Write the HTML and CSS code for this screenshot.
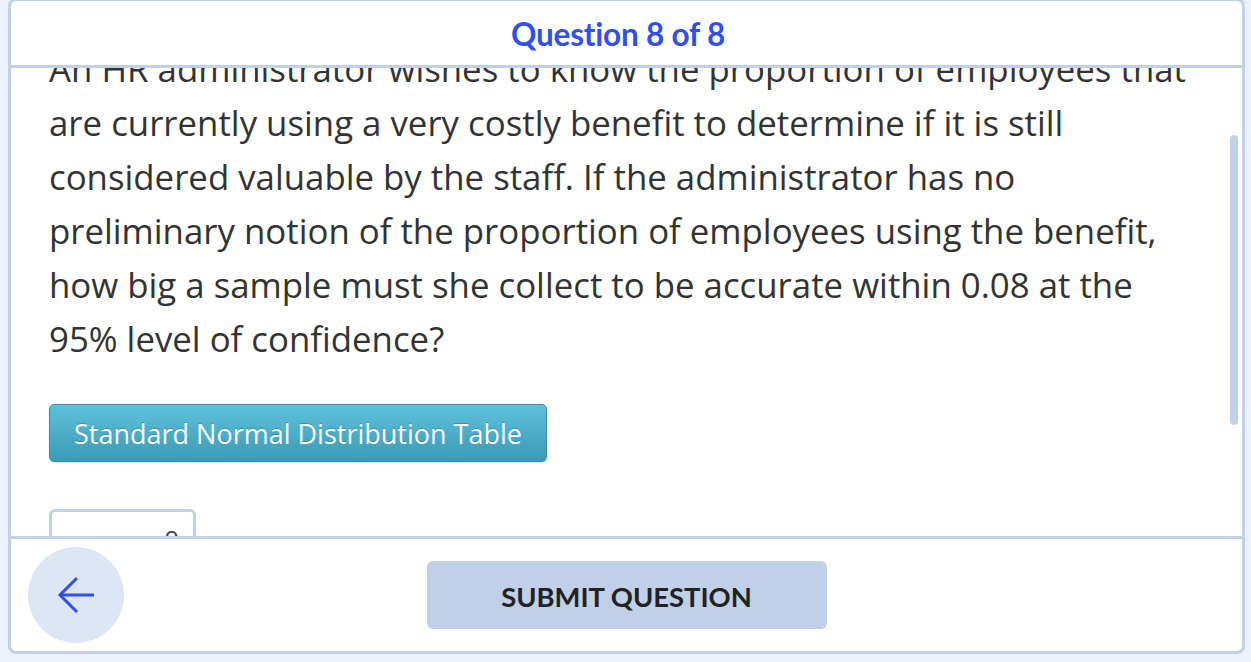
FILE: index.html
```html
<!DOCTYPE html>
<html lang="en">
<head>
<meta charset="utf-8">
<title>Question 8 of 8</title>
<link rel="stylesheet" href="styles.css">
</head>
<body>
<div class="card">
  <header class="card-header">
    <h1 class="q-title">Question 8 of 8</h1>
  </header>
  <main class="card-body">
    <div class="scroll-inner">
      <p class="q-text">An HR administrator wishes to know the proportion of employees that are currently using a very costly benefit to determine if it is still considered valuable by the staff. If the administrator has no preliminary notion of the proportion of employees using the benefit, how big a sample must she collect to be accurate within 0.08 at the 95% level of confidence?</p>
      <button class="table-btn" type="button">Standard Normal Distribution Table</button>
      <div class="answer-box"><span class="answer-val">0</span></div>
    </div>
    <div class="scrollbar"></div>
  </main>
  <footer class="card-footer">
    <button class="back-btn" type="button" aria-label="Back">
      <svg width="38" height="38" viewBox="0 0 38 38" fill="none" stroke="#2f4ff2" stroke-width="3" stroke-linecap="butt" stroke-linejoin="miter">
        <path d="M37 19 H3"/>
        <path d="M20 2 L3 19 L20 36"/>
      </svg>
    </button>
    <button class="submit-btn" type="button">SUBMIT QUESTION</button>
    <span class="spacer"></span>
  </footer>
</div>
</body>
</html>
```

FILE: styles.css
```css
html, body {
  margin: 0;
  padding: 0;
  height: 100%;
  overflow: hidden;
}
body {
  background: #edf1fa;
}
.card {
  box-sizing: border-box;
  margin: -2px 6px 0 8px;
  height: 656px;
  border: 3px solid #bfd0e8;
  border-radius: 8px;
  background: #ffffff;
  display: flex;
  flex-direction: column;
  overflow: hidden;
}
.card-header {
  flex: 0 0 auto;
  height: 64px;
  border-bottom: 3px solid #bfd0e8;
  display: flex;
  align-items: center;
  justify-content: center;
  padding-right: 17px;
}
.q-title {
  margin: 0;
  padding-top: 2px;
  font-family: Lato, "Liberation Sans", sans-serif;
  font-weight: 700;
  font-size: 31.5px;
  color: #2f4ff2;
  letter-spacing: -0.2px;
}
.card-body {
  flex: 1 1 auto;
  position: relative;
  overflow: hidden;
  min-height: 0;
}
.scroll-inner {
  padding: 0 47px 0 38px;
}
.q-text {
  margin: -26px 0 0 0;
  font-family: "Open Sans", "Noto Sans", sans-serif;
  font-size: 34.8px;
  line-height: 54px;
  color: #333333;
}
.table-btn {
  display: block;
  margin-top: 38px;
  box-sizing: border-box;
  width: 498px;
  height: 58px;
  padding: 0;
  border: 1px solid #3a8faa;
  border-radius: 5px;
  background: linear-gradient(to bottom, #5ec1dc 0%, #3b9ab6 100%);
  box-shadow: 0 1px 2px rgba(0,0,0,0.15);
  color: #ffffff;
  font-family: "Open Sans", "Noto Sans", sans-serif;
  font-size: 27px;
  text-shadow: 0 -1px 0 rgba(0,0,0,0.2);
}
.answer-box {
  margin-top: 47px;
  box-sizing: border-box;
  width: 147px;
  height: 50px;
  border: 3px solid #bfd0e8;
  border-radius: 6px;
  display: flex;
  justify-content: flex-end;
  padding: 12px 14px 0 0;
  font-family: "Open Sans", "Noto Sans", sans-serif;
  font-size: 26px;
  line-height: 30px;
  color: #444444;
}
.scrollbar {
  position: absolute;
  right: 4px;
  top: 67px;
  width: 8px;
  height: 290px;
  border-radius: 4px;
  background: #bfd0e8;
}
.card-footer {
  flex: 0 0 auto;
  height: 112px;
  border-top: 3px solid #bfd0e8;
  display: grid;
  grid-template-columns: 1fr auto 1fr;
  align-items: center;
  padding-left: 17px;
  padding-right: 17px;
}
.back-btn {
  justify-self: start;
  width: 96px;
  height: 96px;
  border: 0;
  border-radius: 50%;
  background: #dce6f4;
  display: flex;
  align-items: center;
  justify-content: center;
  padding: 0;
}
.submit-btn {
  width: 400px;
  height: 68px;
  border: 0;
  border-radius: 6px;
  background: #bfd0e8;
  color: #222222;
  font-family: Lato, "Liberation Sans", sans-serif;
  font-weight: 700;
  font-size: 27.4px;
  padding: 2px 0 0 0;
}
.spacer {
  display: block;
}
```
